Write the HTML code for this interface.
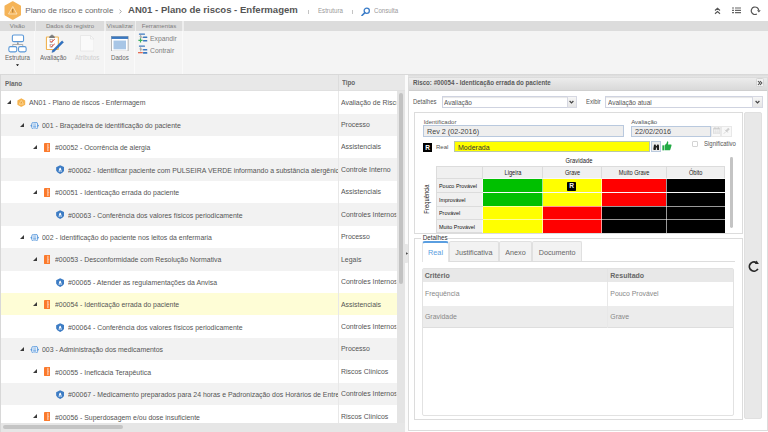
<!DOCTYPE html>
<html><head><meta charset="utf-8">
<style>
*{margin:0;padding:0;box-sizing:border-box}
html,body{width:768px;height:432px;overflow:hidden;background:#fff;font-family:"Liberation Sans",sans-serif;color:#555}
.a{position:absolute;white-space:nowrap}
.row{position:absolute;left:0;width:397px;overflow:hidden}
.tri{position:absolute;width:0;height:0;border-left:4.3px solid transparent;border-bottom:4.1px solid #3a3a3a}
.tt{position:absolute;top:1.3px;height:100%;line-height:22.42px;transform-origin:0 0;transform:scaleX(0.922);font-size:7.5px;color:#555;white-space:nowrap;overflow:hidden}
.rtab{position:absolute;top:21px;height:10px;background:#dcdcdc;font-size:6.1px;line-height:10.4px;color:#7c7c7c;text-align:center}
.sep{position:absolute;top:31px;height:43px;width:1px;background:#fafafa}
.rl{position:absolute;font-size:6.6px;transform-origin:0 0;transform:scaleX(0.93);color:#666;white-space:nowrap}
</style></head><body>
<!-- top bar -->
<svg class="a" style="left:4px;top:1px" width="17.5" height="19" viewBox="0 0 35 38"><path d="M17.5 2L32.5 10.5V27.5L17.5 36L2.5 27.5V10.5Z" fill="#f5b458" stroke="#f5b458" stroke-width="3" stroke-linejoin="round"/><path d="M17.5 11L26 26H9Z" fill="none" stroke="#fbe6c4" stroke-width="1.6" stroke-linejoin="round"/><path d="M17.5 16V23" stroke="#9a6a30" stroke-width="1.8"/></svg>
<div class="a" style="left:25.3px;top:5.2px;font-size:8px;line-height:12px;color:#6a6a6a">Plano de risco e controle</div>
<svg class="a" style="left:119.4px;top:8.6px" width="3" height="5" viewBox="0 0 3 5"><path d="M0.6 0.6L2.3 2.5L0.6 4.4" fill="none" stroke="#999" stroke-width="0.85"/></svg>
<div class="a" style="left:128px;top:4.2px;font-size:9.55px;line-height:12px;font-weight:bold;color:#555">AN01 - Plano de riscos - Enfermagem</div>
<div class="a" style="left:308px;top:9.6px;width:0.8px;height:4.2px;background:#c4c4c4"></div>
<div class="a" style="left:317.6px;top:6.4px;font-size:6.8px;transform-origin:0 0;transform:scaleX(0.9);line-height:10px;color:#999">Estrutura</div>
<div class="a" style="left:352.2px;top:9.6px;width:0.8px;height:4.2px;background:#c4c4c4"></div>
<svg class="a" style="left:361px;top:6.5px" width="9.5" height="9.5" viewBox="0 0 19 19"><circle cx="11.5" cy="7.5" r="5.2" fill="none" stroke="#3a7cc8" stroke-width="2.6"/><path d="M7.8 11.2L2 17" stroke="#3a7cc8" stroke-width="3.2" stroke-linecap="round"/></svg>
<div class="a" style="left:374px;top:6.4px;font-size:6.8px;transform-origin:0 0;transform:scaleX(0.9);line-height:10px;color:#999">Consulta</div>
<svg class="a" style="left:714px;top:6.5px" width="7" height="8" viewBox="0 0 14 16"><path d="M2 7L7 2.5L12 7M2 13.5L7 9L12 13.5" fill="none" stroke="#555" stroke-width="2.2"/></svg>
<svg class="a" style="left:731.8px;top:7.3px" width="9" height="6.6" viewBox="0 0 18 13.2"><path d="M0 2H4M6 2H18M0 6.6H4M6 6.6H18M0 11.2H4M6 11.2H18" stroke="#666" stroke-width="2.4"/></svg>
<svg class="a" style="left:749.6px;top:5.6px" width="11" height="9.5" viewBox="0 0 22 19"><path d="M13.75 16A7.5 7.5 0 1 1 17.4 8.2" fill="none" stroke="#555" stroke-width="2.4"/><path d="M14 8.3L21.5 8.3L17.75 12.8Z" fill="#555"/></svg>

<!-- ribbon -->
<div class="a" style="left:0;top:21px;width:768px;height:10px;background:#dcdcdc"></div>
<div class="a" style="left:0;top:31px;width:768px;height:43px;background:#f4f4f4"></div>
<div class="a" style="left:0;top:73.5px;width:768px;height:3.5px;background:linear-gradient(#d6d6d6,#e6e6e6)"></div>
<div class="rtab" style="left:0;width:34.5px">Visão</div>
<div class="rtab" style="left:36px;width:68px">Dados do registro</div>
<div class="rtab" style="left:105.5px;width:29px">Visualizar</div>
<div class="rtab" style="left:136px;width:46px">Ferramentas</div>
<div class="rtab" style="left:183.5px;width:584.5px"></div>
<div class="a" style="left:34.5px;top:21px;width:1.5px;height:10px;background:#eeeeee"></div>
<div class="a" style="left:104px;top:21px;width:1.5px;height:10px;background:#eeeeee"></div>
<div class="a" style="left:134.5px;top:21px;width:1.5px;height:10px;background:#eeeeee"></div>
<div class="a" style="left:182px;top:21px;width:1.5px;height:10px;background:#eeeeee"></div>
<div class="sep" style="left:34px"></div>
<div class="sep" style="left:103.5px"></div>
<div class="sep" style="left:134.2px"></div>
<div class="sep" style="left:181.8px"></div>
<!-- Estrutura icon -->
<svg class="a" style="left:7.8px;top:33.8px" width="19" height="18.8" viewBox="0 0 38 37.6"><rect x="8.7" y="1.9" width="22.4" height="13.4" rx="3" fill="#fff" stroke="#5a98d8" stroke-width="2.2"/><path d="M19.8 16.4V21M9.5 24.2V21H29.5V24.2" fill="none" stroke="#8a8a8a" stroke-width="1.3"/><path d="M18.3 19.2L19.8 17.2L21.3 19.2Z" fill="#444"/><rect x="1.7" y="25.3" width="15.8" height="10.4" rx="3" fill="#fff" stroke="#5a98d8" stroke-width="2.2"/><rect x="21.1" y="25.3" width="15.2" height="10.4" rx="3" fill="#fff" stroke="#5a98d8" stroke-width="2.2"/></svg>
<div class="rl" style="left:4.6px;top:54px;line-height:8px">Estrutura</div>
<svg class="a" style="left:16px;top:64px" width="3" height="2.4" viewBox="0 0 6 4.8"><path d="M0 0.3H6L3 4.5Z" fill="#111"/></svg>
<!-- Avaliacao icon -->
<svg class="a" style="left:45px;top:33.6px" width="19" height="19" viewBox="0 0 38 38"><rect x="2.9" y="5.9" width="23.8" height="25" rx="0.8" fill="#fff" stroke="#f0b454" stroke-width="2.3"/><path d="M8 7.8L9.3 4.6Q9.8 3.2 11.8 3.2H12.3Q12.8 1 14 1Q15.2 1 15.7 3.2H16.2Q18.2 3.2 18.7 4.6L20 7.8Z" fill="#7a7a7a"/><rect x="10" y="11.4" width="4.6" height="5.4" fill="#fff" stroke="#8a8a8a" stroke-width="1"/><path d="M10.8 13.8L12.8 16.2L19.5 10.4" fill="none" stroke="#e2402e" stroke-width="2"/><rect x="10" y="20.8" width="4.6" height="5.4" fill="#fff" stroke="#8a8a8a" stroke-width="1"/><path d="M10.8 23.2L12.8 25.6L19.5 19.8" fill="none" stroke="#e2402e" stroke-width="2"/><path d="M34 13.6L37.2 16.6L18.2 35.4L13.8 37L15.2 32.6Z" fill="#2f72c4" stroke="#235a9c" stroke-width="0.7"/></svg>
<div class="rl" style="left:40.4px;top:54px;line-height:8px">Avaliação</div>
<!-- Atributos -->
<svg class="a" style="left:79.5px;top:35px" width="14.5" height="16.5" viewBox="0 0 29 33"><path d="M1 1H21L28 8V32H1Z" fill="#fafafa" stroke="#e4e4e4" stroke-width="1.5"/><path d="M21 1V8H28" fill="none" stroke="#e4e4e4" stroke-width="1.5"/></svg>
<div class="rl" style="left:74.8px;top:54px;line-height:8px;color:#ccc">Atributos</div>
<!-- Dados -->
<svg class="a" style="left:111px;top:35.8px" width="17.5" height="15.6" viewBox="0 0 35 31"><rect x="0.8" y="0.8" width="33.4" height="29.4" fill="#fff" stroke="#999" stroke-width="1.4"/><rect x="0.8" y="0.8" width="33.4" height="5" fill="#3a78c0"/><rect x="5" y="9" width="25" height="17.5" fill="#a8c6e6"/></svg>
<div class="rl" style="left:110.8px;top:54px;line-height:8px">Dados</div>
<!-- Expandir / Contrair -->
<svg class="a" style="left:138px;top:33.4px" width="10" height="9.5" viewBox="0 0 10 9.5"><rect x="0.9" y="0.5" width="6.1" height="1.2" rx="0.5" fill="#3a78c0"/><rect x="5" y="3.6" width="4.3" height="1.5" rx="0.5" fill="#3a78c0"/><rect x="5" y="7" width="4.3" height="1.6" rx="0.5" fill="#3a78c0"/><path d="M2.6 1.7V5.5M2.6 4.3H5" fill="none" stroke="#999" stroke-width="0.6"/><circle cx="2.6" cy="3.5" r="0.8" fill="none" stroke="#999" stroke-width="0.6"/><path d="M0.4 7.3H4.6M2.5 5.2V9.4" stroke="#3cb060" stroke-width="1.15"/></svg>
<div class="a" style="left:149.8px;top:33.8px;font-size:7.3px;transform-origin:0 0;transform:scaleX(0.93);line-height:9px;color:#808080">Expandir</div>
<svg class="a" style="left:138px;top:45.4px" width="10" height="9.5" viewBox="0 0 10 9.5"><rect x="0.9" y="0.5" width="6.1" height="1.2" rx="0.5" fill="#3a78c0"/><rect x="5" y="4" width="4.3" height="1.6" rx="0.5" fill="#3a78c0"/><rect x="5" y="7.1" width="4.3" height="1.7" rx="0.5" fill="#3a78c0"/><path d="M2.6 1.7V6.5M2.6 4.8H5" fill="none" stroke="#999" stroke-width="0.6"/><circle cx="2.6" cy="3.9" r="0.8" fill="none" stroke="#999" stroke-width="0.6"/><path d="M0 7.7H4.8" stroke="#e25a3e" stroke-width="1.15"/></svg>
<div class="a" style="left:149.8px;top:46.3px;font-size:7.3px;transform-origin:0 0;transform:scaleX(0.93);line-height:9px;color:#808080">Contrair</div>

<!-- left grid -->
<div class="a" style="left:0;top:75px;width:405.5px;height:357px;background:#fff"></div>
<div class="a" style="left:0;top:75px;width:405.5px;height:15.5px;background:#e8e8e8;border-bottom:1px solid #e0e0e0"></div>
<div class="a" style="left:5px;top:75.6px;font-size:7.2px;transform-origin:0 0;transform:scaleX(0.88);line-height:15.5px;font-weight:bold;color:#666">Plano</div>
<div class="a" style="left:338px;top:75px;width:0.8px;height:15.5px;background:#dcdcdc"></div>
<div class="a" style="left:342px;top:75.3px;font-size:7.2px;transform-origin:0 0;transform:scaleX(0.88);line-height:15.5px;font-weight:bold;color:#666">Tipo</div>
<div class="row" style="top:91.10px;height:22.44px;background:#fff"><div class="tri" style="left:7.20px;top:9.12px"></div><svg width="8.6" height="9.2" viewBox="0 0 18 19" style="position:absolute;left:17.10px;top:6.72px"><path d="M9 0.6Q9.4 0.6 9.8 0.8L16.4 4.6Q17.2 5.1 17.2 6V13Q17.2 13.9 16.4 14.4L9.8 18.2Q9 18.6 8.2 18.2L1.6 14.4Q0.8 13.9 0.8 13V6Q0.8 5.1 1.6 4.6L8.2 0.8Q8.6 0.6 9 0.6Z" fill="#f6b450"/><path d="M9 5L13.3 12.8H4.7Z" fill="none" stroke="#fbe3b8" stroke-width="1.3" stroke-linejoin="round"/><path d="M9 7.8V10.6" stroke="#c98a2a" stroke-width="1.1"/></svg><div class="tt" style="left:29.00px;width:334.71px">AN01 - Plano de riscos - Enfermagem</div><div class="tt" style="left:341.3px;margin-top:-0.8px;width:60.20px">Avaliação de Risco</div></div>
<div class="row" style="top:113.54px;height:22.44px;background:#f2f2f2"><div class="tri" style="left:20.30px;top:9.12px"></div><svg width="9.4" height="7.4" viewBox="0 0 23.5 18.5" style="position:absolute;left:29.90px;top:8.02px"><rect x="4.5" y="1" width="14.5" height="16.5" rx="4" fill="#f6f9fd" stroke="#4a90d9" stroke-width="2"/><path d="M4.5 6L0.5 9.25L4.5 12.5Z M19 6L23 9.25L19 12.5Z" fill="#4a90d9"/><path d="M8 5.2H15.5" stroke="#4a90d9" stroke-width="1.8"/><rect x="8" y="8.8" width="7.5" height="5.2" fill="#6aa4e2"/><path d="M8 11.4H15.5" stroke="#d8e8f8" stroke-width="0.8"/></svg><div class="tt" style="left:41.95px;width:320.66px">001 - Braçadeira de identificação do paciente</div><div class="tt" style="left:341.3px;margin-top:-0.8px;width:60.20px">Processo</div></div>
<div class="row" style="top:135.98px;height:22.44px;background:#fff"><div class="tri" style="left:33.20px;top:9.12px"></div><svg width="6.2" height="8.9" viewBox="0 0 12 17.2" style="position:absolute;left:43.90px;top:6.92px"><rect x="0" y="0" width="12" height="17.2" rx="0.8" fill="#fb7a2c"/><path d="M7.6 1.6V15.6" stroke="#fff" stroke-width="1.5"/><path d="M8.2 8.6H10" stroke="#fdd" stroke-width="1"/></svg><div class="tt" style="left:54.90px;width:306.62px">#00052 - Ocorrência de alergia</div><div class="tt" style="left:341.3px;margin-top:-0.8px;width:60.20px">Assistenciais</div></div>
<div class="row" style="top:158.42px;height:22.44px;background:#f2f2f2"><svg width="8.3" height="9.2" viewBox="0 0 16.6 18.4" style="position:absolute;left:55.90px;top:7.02px"><path d="M8.3 0.3L16.3 4.4V11.2Q15.6 14.6 8.3 18.1Q1 14.6 0.3 11.2V4.4Z" fill="#3d7cc4"/><path d="M5.2 13.5L6.2 8.5Q6.6 6.2 8.3 5.2Q10 6.2 10.4 8.5L11.4 13.5Z" fill="#fff"/><path d="M7.2 13.5V10.5H9.4V13.5" fill="#3d7cc4"/></svg><div class="tt" style="left:67.85px;width:292.57px">#00062 - Identificar paciente com PULSEIRA VERDE informando a substância alergênica</div><div class="tt" style="left:341.3px;margin-top:-0.8px;width:60.20px">Controle Interno</div></div>
<div class="row" style="top:180.86px;height:22.44px;background:#fff"><div class="tri" style="left:33.20px;top:9.12px"></div><svg width="6.2" height="8.9" viewBox="0 0 12 17.2" style="position:absolute;left:43.90px;top:6.92px"><rect x="0" y="0" width="12" height="17.2" rx="0.8" fill="#fb7a2c"/><path d="M7.6 1.6V15.6" stroke="#fff" stroke-width="1.5"/><path d="M8.2 8.6H10" stroke="#fdd" stroke-width="1"/></svg><div class="tt" style="left:54.90px;width:306.62px">#00051 - Identicação errada do paciente</div><div class="tt" style="left:341.3px;margin-top:-0.8px;width:60.20px">Assistenciais</div></div>
<div class="row" style="top:203.30px;height:22.44px;background:#f2f2f2"><svg width="8.3" height="9.2" viewBox="0 0 16.6 18.4" style="position:absolute;left:55.90px;top:7.02px"><path d="M8.3 0.3L16.3 4.4V11.2Q15.6 14.6 8.3 18.1Q1 14.6 0.3 11.2V4.4Z" fill="#3d7cc4"/><path d="M5.2 13.5L6.2 8.5Q6.6 6.2 8.3 5.2Q10 6.2 10.4 8.5L11.4 13.5Z" fill="#fff"/><path d="M7.2 13.5V10.5H9.4V13.5" fill="#3d7cc4"/></svg><div class="tt" style="left:67.85px;width:292.57px">#00063 - Conferência dos valores físicos periodicamente</div><div class="tt" style="left:341.3px;margin-top:-0.8px;width:60.20px">Controles Internos</div></div>
<div class="row" style="top:225.74px;height:22.44px;background:#fff"><div class="tri" style="left:20.30px;top:9.12px"></div><svg width="9.4" height="7.4" viewBox="0 0 23.5 18.5" style="position:absolute;left:29.90px;top:8.02px"><rect x="4.5" y="1" width="14.5" height="16.5" rx="4" fill="#f6f9fd" stroke="#4a90d9" stroke-width="2"/><path d="M4.5 6L0.5 9.25L4.5 12.5Z M19 6L23 9.25L19 12.5Z" fill="#4a90d9"/><path d="M8 5.2H15.5" stroke="#4a90d9" stroke-width="1.8"/><rect x="8" y="8.8" width="7.5" height="5.2" fill="#6aa4e2"/><path d="M8 11.4H15.5" stroke="#d8e8f8" stroke-width="0.8"/></svg><div class="tt" style="left:41.95px;width:320.66px">002 - Identificação do paciente nos leitos da enfermaria</div><div class="tt" style="left:341.3px;margin-top:-0.8px;width:60.20px">Processo</div></div>
<div class="row" style="top:248.18px;height:22.44px;background:#f2f2f2"><div class="tri" style="left:33.20px;top:9.12px"></div><svg width="6.2" height="8.9" viewBox="0 0 12 17.2" style="position:absolute;left:43.90px;top:6.92px"><rect x="0" y="0" width="12" height="17.2" rx="0.8" fill="#fb7a2c"/><path d="M7.6 1.6V15.6" stroke="#fff" stroke-width="1.5"/><path d="M8.2 8.6H10" stroke="#fdd" stroke-width="1"/></svg><div class="tt" style="left:54.90px;width:306.62px">#00053 - Desconformidade com Resolução Normativa</div><div class="tt" style="left:341.3px;margin-top:-0.8px;width:60.20px">Legais</div></div>
<div class="row" style="top:270.62px;height:22.44px;background:#fff"><svg width="8.3" height="9.2" viewBox="0 0 16.6 18.4" style="position:absolute;left:55.90px;top:7.02px"><path d="M8.3 0.3L16.3 4.4V11.2Q15.6 14.6 8.3 18.1Q1 14.6 0.3 11.2V4.4Z" fill="#3d7cc4"/><path d="M5.2 13.5L6.2 8.5Q6.6 6.2 8.3 5.2Q10 6.2 10.4 8.5L11.4 13.5Z" fill="#fff"/><path d="M7.2 13.5V10.5H9.4V13.5" fill="#3d7cc4"/></svg><div class="tt" style="left:67.85px;width:292.57px">#00065 - Atender as regulamentações da Anvisa</div><div class="tt" style="left:341.3px;margin-top:-0.8px;width:60.20px">Controles Internos</div></div>
<div class="row" style="top:293.06px;height:22.44px;background:#fefdd6"><div class="tri" style="left:33.20px;top:9.12px"></div><svg width="6.2" height="8.9" viewBox="0 0 12 17.2" style="position:absolute;left:43.90px;top:6.92px"><rect x="0" y="0" width="12" height="17.2" rx="0.8" fill="#fb7a2c"/><path d="M7.6 1.6V15.6" stroke="#fff" stroke-width="1.5"/><path d="M8.2 8.6H10" stroke="#fdd" stroke-width="1"/></svg><div class="tt" style="left:54.90px;width:306.62px">#00054 - Identicação errada do paciente</div><div class="tt" style="left:341.3px;margin-top:-0.8px;width:60.20px">Assistenciais</div></div>
<div class="row" style="top:315.50px;height:22.44px;background:#fff"><svg width="8.3" height="9.2" viewBox="0 0 16.6 18.4" style="position:absolute;left:55.90px;top:7.02px"><path d="M8.3 0.3L16.3 4.4V11.2Q15.6 14.6 8.3 18.1Q1 14.6 0.3 11.2V4.4Z" fill="#3d7cc4"/><path d="M5.2 13.5L6.2 8.5Q6.6 6.2 8.3 5.2Q10 6.2 10.4 8.5L11.4 13.5Z" fill="#fff"/><path d="M7.2 13.5V10.5H9.4V13.5" fill="#3d7cc4"/></svg><div class="tt" style="left:67.85px;width:292.57px">#00064 - Conferência dos valores físicos periodicamente</div><div class="tt" style="left:341.3px;margin-top:-0.8px;width:60.20px">Controles Internos</div></div>
<div class="row" style="top:337.94px;height:22.44px;background:#f2f2f2"><div class="tri" style="left:20.30px;top:9.12px"></div><svg width="9.4" height="7.4" viewBox="0 0 23.5 18.5" style="position:absolute;left:29.90px;top:8.02px"><rect x="4.5" y="1" width="14.5" height="16.5" rx="4" fill="#f6f9fd" stroke="#4a90d9" stroke-width="2"/><path d="M4.5 6L0.5 9.25L4.5 12.5Z M19 6L23 9.25L19 12.5Z" fill="#4a90d9"/><path d="M8 5.2H15.5" stroke="#4a90d9" stroke-width="1.8"/><rect x="8" y="8.8" width="7.5" height="5.2" fill="#6aa4e2"/><path d="M8 11.4H15.5" stroke="#d8e8f8" stroke-width="0.8"/></svg><div class="tt" style="left:41.95px;width:320.66px">003 - Administração dos medicamentos</div><div class="tt" style="left:341.3px;margin-top:-0.8px;width:60.20px">Processo</div></div>
<div class="row" style="top:360.38px;height:22.44px;background:#fff"><div class="tri" style="left:33.20px;top:9.12px"></div><svg width="6.2" height="8.9" viewBox="0 0 12 17.2" style="position:absolute;left:43.90px;top:6.92px"><rect x="0" y="0" width="12" height="17.2" rx="0.8" fill="#fb7a2c"/><path d="M7.6 1.6V15.6" stroke="#fff" stroke-width="1.5"/><path d="M8.2 8.6H10" stroke="#fdd" stroke-width="1"/></svg><div class="tt" style="left:54.90px;width:306.62px">#00055 - Ineficácia Terapêutica</div><div class="tt" style="left:341.3px;margin-top:-0.8px;width:60.20px">Riscos Clínicos</div></div>
<div class="row" style="top:382.82px;height:22.44px;background:#f2f2f2"><svg width="8.3" height="9.2" viewBox="0 0 16.6 18.4" style="position:absolute;left:55.90px;top:7.02px"><path d="M8.3 0.3L16.3 4.4V11.2Q15.6 14.6 8.3 18.1Q1 14.6 0.3 11.2V4.4Z" fill="#3d7cc4"/><path d="M5.2 13.5L6.2 8.5Q6.6 6.2 8.3 5.2Q10 6.2 10.4 8.5L11.4 13.5Z" fill="#fff"/><path d="M7.2 13.5V10.5H9.4V13.5" fill="#3d7cc4"/></svg><div class="tt" style="left:67.85px;width:292.57px">#00067 - Medicamento preparados para 24 horas e Padronização dos Horários de Entrega</div><div class="tt" style="left:341.3px;margin-top:-0.8px;width:60.20px">Controles Internos</div></div>
<div class="row" style="top:405.26px;height:22.44px;background:#fff"><div class="tri" style="left:33.20px;top:9.12px"></div><svg width="6.2" height="8.9" viewBox="0 0 12 17.2" style="position:absolute;left:43.90px;top:6.92px"><rect x="0" y="0" width="12" height="17.2" rx="0.8" fill="#fb7a2c"/><path d="M7.6 1.6V15.6" stroke="#fff" stroke-width="1.5"/><path d="M8.2 8.6H10" stroke="#fdd" stroke-width="1"/></svg><div class="tt" style="left:54.90px;width:306.62px">#00056 - Superdosagem e/ou dose insuficiente</div><div class="tt" style="left:341.3px;margin-top:-0.8px;width:60.20px">Riscos Clínicos</div></div>
<div class="a" style="left:338.2px;top:91px;width:0.7px;height:334px;background:#e8e8e8"></div>
<div class="a" style="left:0;top:75px;width:1.2px;height:357px;background:#d8d8d8"></div>
<!-- v scrollbar -->
<div class="a" style="left:397.2px;top:91px;width:8.3px;height:341px;background:#e4e4e4"></div>
<div class="a" style="left:399px;top:93px;width:3.8px;height:191px;background:#c2c2c2;border-radius:2px"></div>
<!-- h scrollbar -->
<div class="a" style="left:1px;top:422.8px;width:404.5px;height:9.2px;background:#e6e6e6"></div>
<div class="a" style="left:3px;top:425px;width:119.5px;height:3.8px;background:#c4c4c4;border-radius:2px"></div>
<!-- splitter -->
<div class="a" style="left:405.3px;top:75px;width:3px;height:357px;background:#fbfbfb"></div>
<div class="a" style="left:405.3px;top:244px;width:2.8px;height:18.5px;background:#e6e6e6;border-radius:0 1px 1px 0"></div>
<svg class="a" style="left:406px;top:251.5px" width="2.2" height="3" viewBox="0 0 4.4 6"><path d="M0.3 0.3L4.2 3L0.3 5.7Z" fill="#333"/></svg>

<!-- right panel -->
<div class="a" style="left:408.2px;top:76.8px;width:359.5px;height:354.5px;background:#fff;border:1px solid #dcdcdc"></div>
<div class="a" style="left:409px;top:77.5px;width:358px;height:13px;background:linear-gradient(#ececec,#d9d9d9);border-bottom:1px solid #cfcfcf"></div>
<div class="a" style="left:413.2px;top:75.5px;font-size:7px;transform-origin:0 0;transform:scaleX(0.885);line-height:13px;font-weight:bold;color:#5a5a5a">Risco: #00054 - Identicação errada do paciente</div>
<div class="a" style="left:755.6px;top:78.3px;width:8px;height:8.8px;background:#f2f2f2;border:0.8px solid #d4d4d4;border-radius:1.5px"></div>
<svg class="a" style="left:757px;top:80px" width="6" height="6" viewBox="0 0 6 6"><path d="M1 1L2.8 3L1 5M3 1L4.8 3L3 5" fill="none" stroke="#505050" stroke-width="1.1"/></svg>

<div class="a" style="left:413.3px;top:97px;font-size:6.6px;transform-origin:0 0;transform:scaleX(0.9);line-height:10px;color:#555">Detalhes</div>
<div class="a" style="left:442px;top:95.6px;width:134.5px;height:12.3px;background:#fff;border:1px solid #cfd3e0;box-shadow:inset 0 1px 1px rgba(0,0,0,0.1)"></div>
<div class="a" style="left:444.4px;top:96.5px;font-size:7.2px;transform-origin:0 0;transform:scaleX(0.9);line-height:12.3px;color:#555">Avaliação</div>
<div class="a" style="left:567px;top:95.6px;width:9.5px;height:12.3px;background:linear-gradient(#f6f6f6,#e6e6e6);border:1px solid #d6d8e2"></div>
<svg class="a" style="left:569.3px;top:99.5px" width="5" height="4" viewBox="0 0 10 8"><path d="M1.2 2L5 5.8L8.8 2" fill="none" stroke="#444" stroke-width="2.4"/></svg>
<div class="a" style="left:585.8px;top:97px;font-size:6.6px;transform-origin:0 0;transform:scaleX(0.9);line-height:10px;color:#555">Exibir</div>
<div class="a" style="left:605px;top:95.6px;width:157.6px;height:12.3px;background:#fff;border:1px solid #cfd3e0;box-shadow:inset 0 1px 1px rgba(0,0,0,0.1)"></div>
<div class="a" style="left:607.8px;top:96.5px;font-size:7.2px;transform-origin:0 0;transform:scaleX(0.9);line-height:12.3px;color:#555">Avaliação atual</div>
<div class="a" style="left:752.2px;top:95.6px;width:10.4px;height:12.3px;background:linear-gradient(#f6f6f6,#e6e6e6);border:1px solid #d6d8e2"></div>
<svg class="a" style="left:754.9px;top:99.5px" width="5" height="4" viewBox="0 0 10 8"><path d="M1.2 2L5 5.8L8.8 2" fill="none" stroke="#444" stroke-width="2.4"/></svg>

<!-- top box -->
<div class="a" style="left:414.3px;top:112.2px;width:328.5px;height:122px;border:1px solid #dcdcdc"></div>
<div class="a" style="left:744.2px;top:112.3px;width:18.2px;height:307.2px;background:#e8e8e8;border:0.8px solid #e0e0e0;border-radius:2px"></div>
<svg class="a" style="left:747.5px;top:259.8px" width="12.5" height="12.5" viewBox="0 0 22 22"><path d="M17.43 15.5A8 8 0 1 1 14.5 4.57" fill="none" stroke="#2a2a2a" stroke-width="3"/><path d="M12.1 7L15.1 0.8L19.2 7.2Z" fill="#2a2a2a"/></svg>

<div class="a" style="left:423.7px;top:118.5px;font-size:6px;line-height:7px;color:#555">Identificador</div>
<div class="a" style="left:423px;top:125.4px;width:200.6px;height:11.3px;background:#eeeeee;border:1px solid #b9c9de"></div>
<div class="a" style="left:427px;top:126px;font-size:8px;transform-origin:0 0;transform:scaleX(0.9);line-height:11.3px;color:#444">Rev 2 (02-2016)</div>
<div class="a" style="left:631.2px;top:118.5px;font-size:6px;line-height:7px;color:#555">Avaliação</div>
<div class="a" style="left:631.2px;top:125.5px;width:79.8px;height:11px;background:#eeeeee;border:1px solid #b9c9de"></div>
<div class="a" style="left:635px;top:126px;font-size:8px;transform-origin:0 0;transform:scaleX(0.9);line-height:11px;color:#444">22/02/2016</div>
<div class="a" style="left:711px;top:125.5px;width:10.2px;height:11px;background:#f8f8f8;border:0.7px solid #e8e8e8"></div>
<div class="a" style="left:721.2px;top:125.5px;width:10.6px;height:11px;background:#f8f8f8;border:0.7px solid #e8e8e8"></div>
<svg class="a" style="left:712.6px;top:127px" width="7.4" height="7.4" viewBox="0 0 15 15"><rect x="1" y="2" width="13" height="12" rx="1" fill="#f4f4f4" stroke="#cfcfcf" stroke-width="1.2"/><rect x="1" y="2" width="13" height="3" fill="#d4d4d4"/><path d="M4 0.5V3.5M11 0.5V3.5" stroke="#c4c4c4" stroke-width="1.4"/><path d="M1.5 8.5H13.5M1.5 11.2H13.5M5.2 5V13.5M9.8 5V13.5" stroke="#dadada" stroke-width="0.8"/></svg>
<svg class="a" style="left:722.8px;top:126.8px" width="7.5" height="7.5" viewBox="0 0 15 15"><path d="M1.5 13.5L6 9" stroke="#c8c8c8" stroke-width="1.3"/><path d="M5 6.5L8.5 10L9.5 8.5L13.5 4.5L10.5 1.5L6.5 5.5Z" fill="#d0d0d0"/><path d="M4 5.5L9.5 11" stroke="#c0c0c0" stroke-width="1.4"/></svg>

<div class="a" style="left:423px;top:143.2px;width:9.1px;height:9.1px;background:#000;color:#fff;font-size:6.5px;font-weight:bold;line-height:9.1px;text-align:center">R</div>
<div class="a" style="left:436px;top:142.5px;font-size:6px;line-height:8px;color:#555">Real</div>
<div class="a" style="left:454.3px;top:141.3px;width:195.7px;height:11px;background:#ffff00;border:1px solid #b8c8a8"></div>
<div class="a" style="left:457.9px;top:141.9px;font-size:7.8px;transform-origin:0 0;transform:scaleX(0.9);line-height:11px;color:#333">Moderada</div>
<div class="a" style="left:651.3px;top:141.1px;width:9.5px;height:11.4px;background:#ececec;border:0.8px solid #b9c9de"></div>
<svg class="a" style="left:652.6px;top:143.6px" width="6.8" height="6.2" viewBox="0 0 14 13"><path d="M0.5 11Q0.5 12.5 2.5 12.5H4.5Q6 12.5 6 11V3Q6 1 4.5 1H3Q2 1 1.8 2.5Z" fill="#1e1e1e"/><path d="M13.5 11Q13.5 12.5 11.5 12.5H9.5Q8 12.5 8 11V3Q8 1 9.5 1H11Q12 1 12.2 2.5Z" fill="#1e1e1e"/><rect x="5.5" y="4" width="3" height="3.5" fill="#1e1e1e"/></svg>
<svg class="a" style="left:661.9px;top:141px" width="9.8" height="9.6" viewBox="0 0 20 20"><path d="M0.5 9H4.5V19.5H0.5Z" fill="#22aa44"/><path d="M5.5 9L9.5 4.5L10.5 0.5C12.5 0.5 13.5 2 12.5 5.5L12 7.5H18C19.5 7.5 20 9 19.5 10L17 18.5C16.5 19.5 16 19.5 15 19.5H5.5Z" fill="#22aa44"/></svg>
<div class="a" style="left:691.6px;top:140.6px;width:6.6px;height:6.4px;background:#fff;border:0.7px solid #d4d4d4;border-radius:1px"></div>
<div class="a" style="left:703.5px;top:139.6px;font-size:6.5px;transform-origin:0 0;transform:scaleX(0.92);line-height:8px;color:#555">Significativo</div>

<!-- matrix -->
<div class="a" style="left:578.7px;top:157.3px;transform:translateX(-50%) scaleX(0.88);font-size:6.6px;line-height:8px;color:#222">Gravidade</div>
<div class="a" style="left:426.9px;top:199px;transform:translate(-50%,-50%) rotate(-90deg) scaleX(0.9);font-size:6.5px;line-height:8px;color:#222">Frequência</div>
<div class="a" style="left:436px;top:166.3px;width:289.40px;height:66.70px;background:#f0f0f0;border:1px solid #dcdcdc"></div>
<div class="a" style="left:482.50px;top:178.90px;width:60.00px;height:13.60px;background:#00c000"></div>
<div class="a" style="left:542.50px;top:178.90px;width:59.20px;height:13.60px;background:#ffff00"></div>
<div class="a" style="left:601.70px;top:178.90px;width:64.30px;height:13.60px;background:#ff0000"></div>
<div class="a" style="left:666.00px;top:178.90px;width:59.40px;height:13.60px;background:#000000"></div>
<div class="a" style="left:482.50px;top:192.50px;width:60.00px;height:13.50px;background:#00c000"></div>
<div class="a" style="left:542.50px;top:192.50px;width:59.20px;height:13.50px;background:#ffff00"></div>
<div class="a" style="left:601.70px;top:192.50px;width:64.30px;height:13.50px;background:#ff0000"></div>
<div class="a" style="left:666.00px;top:192.50px;width:59.40px;height:13.50px;background:#000000"></div>
<div class="a" style="left:482.50px;top:206.00px;width:60.00px;height:13.50px;background:#ffff00"></div>
<div class="a" style="left:542.50px;top:206.00px;width:59.20px;height:13.50px;background:#ff0000"></div>
<div class="a" style="left:601.70px;top:206.00px;width:64.30px;height:13.50px;background:#000000"></div>
<div class="a" style="left:666.00px;top:206.00px;width:59.40px;height:13.50px;background:#000000"></div>
<div class="a" style="left:482.50px;top:219.50px;width:60.00px;height:13.50px;background:#ffff00"></div>
<div class="a" style="left:542.50px;top:219.50px;width:59.20px;height:13.50px;background:#ff0000"></div>
<div class="a" style="left:601.70px;top:219.50px;width:64.30px;height:13.50px;background:#000000"></div>
<div class="a" style="left:666.00px;top:219.50px;width:59.40px;height:13.50px;background:#000000"></div>
<div class="a" style="left:482.00px;top:166.3px;width:1px;height:12.60px;background:#dcdcdc"></div>
<div class="a" style="left:482.00px;top:178.90px;width:1px;height:54.10px;background:rgba(255,255,255,0.6)"></div>
<div class="a" style="left:542.00px;top:166.3px;width:1px;height:12.60px;background:#dcdcdc"></div>
<div class="a" style="left:542.00px;top:178.90px;width:1px;height:54.10px;background:rgba(255,255,255,0.6)"></div>
<div class="a" style="left:601.20px;top:166.3px;width:1px;height:12.60px;background:#dcdcdc"></div>
<div class="a" style="left:601.20px;top:178.90px;width:1px;height:54.10px;background:rgba(255,255,255,0.6)"></div>
<div class="a" style="left:665.50px;top:166.3px;width:1px;height:12.60px;background:#dcdcdc"></div>
<div class="a" style="left:665.50px;top:178.90px;width:1px;height:54.10px;background:rgba(255,255,255,0.6)"></div>
<div class="a" style="left:436px;top:178.40px;width:46.50px;height:1px;background:#dcdcdc"></div>
<div class="a" style="left:482.50px;top:178.40px;width:242.90px;height:1px;background:rgba(255,255,255,0.6)"></div>
<div class="a" style="left:436px;top:192.00px;width:46.50px;height:1px;background:#dcdcdc"></div>
<div class="a" style="left:482.50px;top:192.00px;width:242.90px;height:1px;background:rgba(255,255,255,0.6)"></div>
<div class="a" style="left:436px;top:205.50px;width:46.50px;height:1px;background:#dcdcdc"></div>
<div class="a" style="left:482.50px;top:205.50px;width:242.90px;height:1px;background:rgba(255,255,255,0.6)"></div>
<div class="a" style="left:436px;top:219.00px;width:46.50px;height:1px;background:#dcdcdc"></div>
<div class="a" style="left:482.50px;top:219.00px;width:242.90px;height:1px;background:rgba(255,255,255,0.6)"></div>
<div class="a" style="left:482.5px;top:166.3px;width:60.0px;text-align:center;font-size:6.4px;transform:scaleX(0.88);line-height:13.2px;color:#222">Ligeira</div>
<div class="a" style="left:542.5px;top:166.3px;width:59.2px;text-align:center;font-size:6.4px;transform:scaleX(0.88);line-height:13.2px;color:#222">Grave</div>
<div class="a" style="left:601.7px;top:166.3px;width:64.3px;text-align:center;font-size:6.4px;transform:scaleX(0.88);line-height:13.2px;color:#222">Muito Grave</div>
<div class="a" style="left:666px;top:166.3px;width:59.4px;text-align:center;font-size:6.4px;transform:scaleX(0.88);line-height:13.2px;color:#222">Óbito</div>
<div class="a" style="left:438.7px;top:179.10px;font-size:6.1px;transform-origin:0 0;transform:scaleX(0.89);line-height:13.6px;color:#111">Pouco Provável</div>
<div class="a" style="left:438.7px;top:192.70px;font-size:6.1px;transform-origin:0 0;transform:scaleX(0.89);line-height:13.5px;color:#111">Improvável</div>
<div class="a" style="left:438.7px;top:206.20px;font-size:6.1px;transform-origin:0 0;transform:scaleX(0.89);line-height:13.5px;color:#111">Provável</div>
<div class="a" style="left:438.7px;top:219.70px;font-size:6.1px;transform-origin:0 0;transform:scaleX(0.89);line-height:13.5px;color:#111">Muito Provável</div>
<div class="a" style="left:567.2px;top:181.8px;width:8.8px;height:8.8px;background:#000;color:#eee;font-size:6.6px;font-weight:bold;line-height:8.8px;text-align:center;border-radius:0.8px">R</div>
<div class="a" style="left:730px;top:157.3px;width:2.7px;height:70.8px;background:#c4c4c4;border-radius:1.4px"></div>

<!-- detalhes fieldset -->
<div class="a" style="left:414.4px;top:238.2px;width:328.4px;height:182px;border:1px solid #dcdcdc"></div>
<div class="a" style="left:421px;top:234.5px;width:27px;height:6px;background:#fff"></div>
<div class="a" style="left:422.8px;top:234px;font-size:6.3px;line-height:7px;color:#333">Detalhes</div>
<div class="a" style="left:422px;top:261px;width:313px;height:0.8px;background:#dddddd"></div>
<div class="a" style="left:449px;top:241.2px;width:50px;height:20px;background:#f2f2f2;border:1px solid #e0e0e0;border-bottom:none;border-radius:2px 2px 0 0"></div>
<div class="a" style="left:499px;top:241.2px;width:33.2px;height:20px;background:#f2f2f2;border:1px solid #e0e0e0;border-bottom:none;border-radius:2px 2px 0 0"></div>
<div class="a" style="left:532.2px;top:241.2px;width:49.5px;height:20px;background:#f2f2f2;border:1px solid #e0e0e0;border-bottom:none;border-radius:2px 2px 0 0"></div>
<div class="a" style="left:422.2px;top:240.8px;width:26.8px;height:21px;background:#fff;border:1px solid #e4e4e4;border-top:2px solid #5a9ee0;border-bottom:none;border-radius:3px 3px 0 0"></div>
<div class="a" style="left:428px;top:242.8px;font-size:7.3px;line-height:20px;color:#5a9ee0">Real</div>
<div class="a" style="left:455.3px;top:242.8px;font-size:7.2px;line-height:20px;color:#666">Justificativa</div>
<div class="a" style="left:505.3px;top:242.8px;font-size:7.2px;line-height:20px;color:#666">Anexo</div>
<div class="a" style="left:538.7px;top:242.8px;font-size:7.2px;line-height:20px;color:#666">Documento</div>

<div class="a" style="left:421.9px;top:268.3px;width:312px;height:147.5px;border:1px solid #e2e2e2;border-radius:2px;background:#fff"></div>
<div class="a" style="left:422.6px;top:268.8px;width:310.7px;height:13.6px;background:#e8e8e8"></div>
<div class="a" style="left:606.7px;top:268.8px;width:0.8px;height:58.4px;background:#e4e4e4"></div>
<div class="a" style="left:424.8px;top:268.8px;font-size:7px;line-height:13.6px;font-weight:bold;color:#666">Critério</div>
<div class="a" style="left:610.3px;top:268.8px;font-size:7px;line-height:13.6px;font-weight:bold;color:#666">Resultado</div>
<div class="a" style="left:422.6px;top:305.5px;width:310.7px;height:22.2px;background:#ececec;border-bottom:0.8px solid #dedede"></div>
<div class="a" style="left:606.7px;top:282.4px;width:0.8px;height:45.3px;background:#e8e8e8"></div>
<div class="a" style="left:425px;top:283.2px;font-size:6.9px;line-height:22.6px;color:#888">Frequência</div>
<div class="a" style="left:610.3px;top:283.2px;font-size:6.9px;line-height:22.6px;color:#888">Pouco Provável</div>
<div class="a" style="left:425px;top:305.8px;font-size:6.9px;line-height:22.2px;color:#888">Gravidade</div>
<div class="a" style="left:610.3px;top:305.8px;font-size:6.9px;line-height:22.2px;color:#888">Grave</div>
</body></html>
